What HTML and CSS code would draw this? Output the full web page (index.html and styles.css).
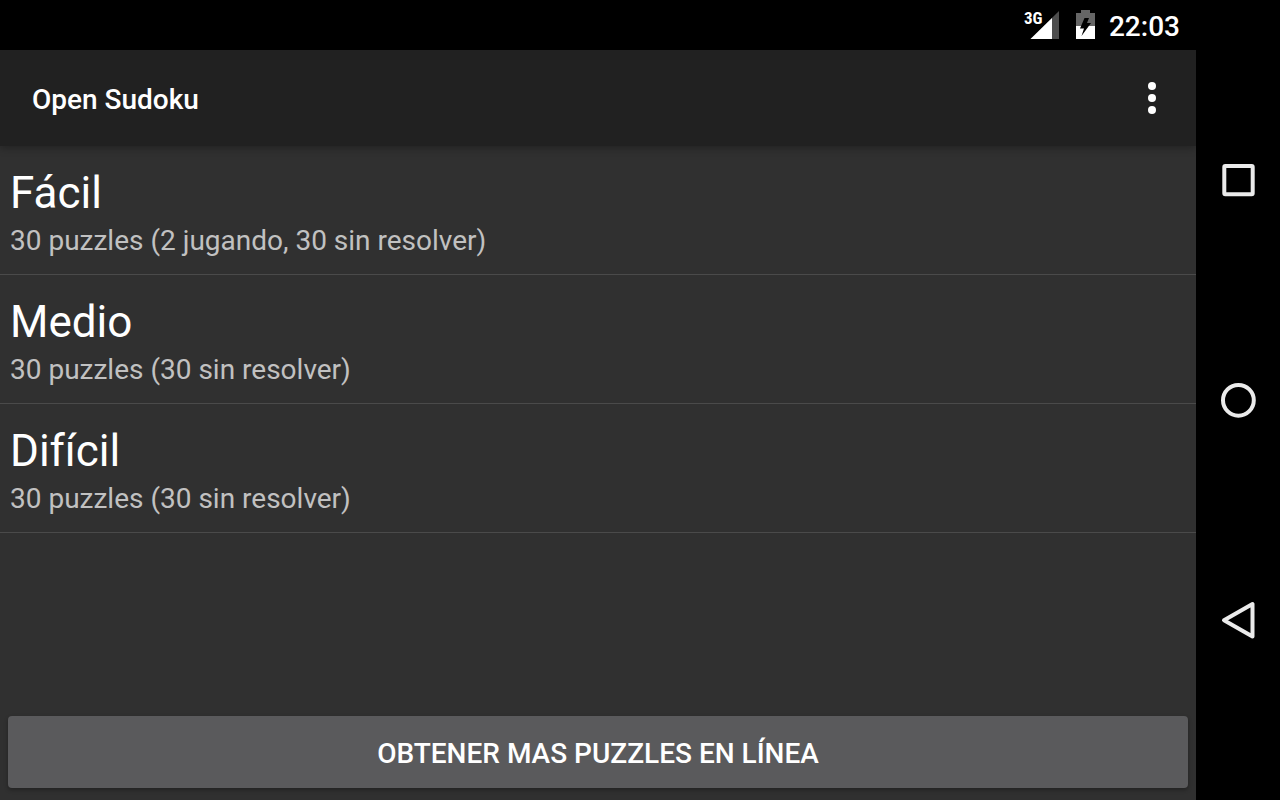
FILE: index.html
```html
<!DOCTYPE html>
<html lang="es">
<head>
<meta charset="utf-8">
<title>Open Sudoku</title>
<link rel="stylesheet" href="styles.css">
</head>
<body>
<div class="screen">
  <div class="status-bar">
    <svg class="signal" width="36" height="38" viewBox="0 -4 36 38" role="img" aria-label="3G">
      <path d="M36 1V29H7.500Z" fill="#4d4d4d"/>
      <path d="M29 8V29H7.500Z" fill="#fff"/>
      <text class="network" x="1" y="14">3G</text>
    </svg>
    <svg class="battery" width="20" height="30" viewBox="0 0 20 30" role="img" aria-label="Batería">
      <path d="M6 0h9v3h5v13H1V3h5z" fill="#666"/>
      <path d="M1 16h19v13H1z" fill="#fff"/>
      <path d="M9.500 8H14L12 13H16L6.500 26L9 18.500H5Z" fill="#000"/>
    </svg>
    <time class="clock">22:03</time>
  </div>
  <main class="app">
    <header class="toolbar">
      <h1 class="title">Open Sudoku</h1>
      <button class="overflow" type="button" aria-label="Más opciones">
        <svg width="8" height="34" viewBox="0 0 8 34" fill="#fff"><circle cx="4" cy="5" r="4"/><circle cx="4" cy="17" r="4"/><circle cx="4" cy="29" r="4"/></svg>
      </button>
    </header>
    <ul class="folders">
      <li class="folder"><a class="link" href="#facil"><span class="name">Fácil</span><span class="detail">30 puzzles (2 jugando, 30 sin resolver)</span></a></li>
      <li class="folder"><a class="link" href="#medio"><span class="name">Medio</span><span class="detail">30 puzzles (30 sin resolver)</span></a></li>
      <li class="folder"><a class="link" href="#dificil"><span class="name">Difícil</span><span class="detail">30 puzzles (30 sin resolver)</span></a></li>
    </ul>
    <button class="more" type="button">OBTENER MAS PUZZLES EN LÍNEA</button>
  </main>
  <nav class="nav-bar" aria-label="Sistema">
    <button class="nav-key" type="button" aria-label="Recientes"><svg width="40" height="40" viewBox="0 0 40 40"><rect x="6.300" y="6" width="28.400" height="28.200" rx="1"/></svg></button>
    <button class="nav-key" type="button" aria-label="Inicio"><svg width="40" height="40" viewBox="0 0 40 40"><circle cx="20.400" cy="20.300" r="15.400"/></svg></button>
    <button class="nav-key" type="button" aria-label="Atrás"><svg width="40" height="40" viewBox="0 0 40 40"><path d="M34.500 4V36.500L6 20.300Z"/></svg></button>
  </nav>
</div>
</body>
</html>
```
FILE: styles.css
```css
* { box-sizing: border-box; }
body { margin: 0; background: #000; color: #fff; font-family: Roboto, sans-serif; }
button { border: 0; padding: 0; background: none; color: inherit; font: inherit; cursor: pointer; }
svg { display: block; }
.screen { display: grid; grid-template: auto 1fr / 1fr 84px; min-height: 100vh; }
.status-bar { display: flex; align-items: center; justify-content: flex-end; height: 50px; padding-right: 16px; }
.signal { margin-right: 16px; overflow: visible; }
.network { fill: #fff; font-family: "Roboto Condensed", Roboto, sans-serif; font-size: 17px; font-weight: 700; }
.battery { margin-right: 14px; }
.clock { padding-top: 4px; font-size: 28px; font-weight: 500; line-height: 32px; }
.app { grid-column: 1; display: flex; flex-direction: column; background: #303030; }
.toolbar { display: flex; align-items: center; justify-content: space-between; height: 96px; padding: 0 20px 0 32px; background: #212121; box-shadow: 0 2px 8px rgba(0, 0, 0, 0.3); clip-path: inset(0 0 -16px 0); }
.title { margin: 0; padding-top: 4px; font-size: 28px; font-weight: 500; line-height: 32px; }
.overflow { display: grid; place-items: center; width: 48px; height: 64px; }
.folders { flex: 1; margin: 0; padding: 0; list-style: none; }
.folder { border-bottom: 1px solid #4a4a4a; }
.link { display: flex; flex-direction: column; gap: 2px; padding: 19px 10px 15px; color: inherit; text-decoration: none; }
.name { font-size: 44px; line-height: 56px; }
.detail { color: #c1c1c1; font-size: 28px; line-height: 36px; }
.more { height: 72px; margin: 8px 8px 12px; padding-top: 2px; border-radius: 4px; background: #5a5a5c; box-shadow: 0 2px 4px rgba(0, 0, 0, 0.3); font-size: 28px; font-weight: 500; }
.nav-bar { grid-column: 2; grid-row: 1 / 3; display: flex; flex-direction: column; padding: 70px 0; background: #000; }
.nav-key { flex: 1; display: grid; place-items: center; }
.nav-key svg { fill: none; stroke: #ebebeb; stroke-width: 4; stroke-linejoin: round; }
```
